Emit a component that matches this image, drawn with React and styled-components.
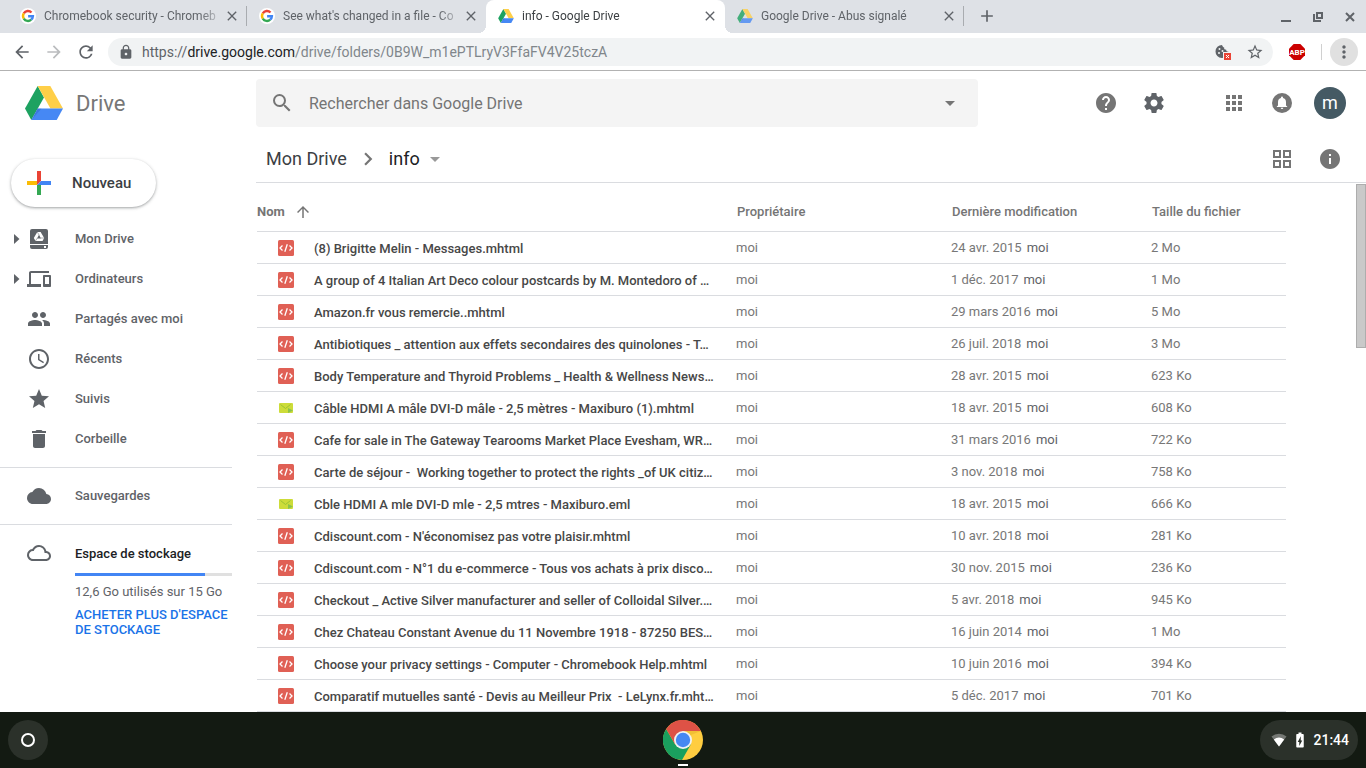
import styled, { createGlobalStyle, css } from 'styled-components';
import {
  MdAccessTime,
  MdAdd,
  MdApps,
  MdArrowBack,
  MdArrowDropDown,
  MdArrowForward,
  MdArrowUpward,
  MdBatteryChargingFull,
  MdChevronRight,
  MdClose,
  MdCloud,
  MdCloudQueue,
  MdDelete,
  MdDevices,
  MdHelp,
  MdInfo,
  MdLock,
  MdMoreVert,
  MdPeople,
  MdRefresh,
  MdSearch,
  MdStar,
  MdStarBorder,
} from 'react-icons/md';

const GlobalStyles = createGlobalStyle`
  *,
  *::before,
  *::after {
    box-sizing: border-box;
    margin: 0;
    padding: 0;
  }

  body {
    font-family: Roboto, 'Liberation Sans', sans-serif;
    font-size: 13px;
    color: #5f6368;
    background-color: #fff;
  }

  button,
  input {
    font: inherit;
    color: inherit;
    background: none;
    border: none;
    outline: none;
  }

  a {
    color: inherit;
    text-decoration: none;
  }

  svg {
    display: block;
    flex-shrink: 0;
  }
`;

const Screen = styled.div`
  height: 100vh;
  display: flex;
  flex-direction: column;
  overflow: hidden;
`;

/* Browser tabs */

const TabStrip = styled.div`
  height: 33px;
  flex-shrink: 0;
  display: flex;
  align-items: stretch;
  padding-left: 8px;
  background-color: #dee1e6;
`;

const Tab = styled.div`
  position: relative;
  flex: 0 1 239px;
  min-width: 0;
  display: flex;
  align-items: center;
  padding: 0 7px 1px 12px;
  font-size: 12px;
  line-height: 16px;

  ${(props) =>
    props.$active &&
    css`
      color: #3c4043;
      background-color: #fff;
      border-radius: 8px 8px 0 0;

      &::before,
      &::after {
        content: '';
        position: absolute;
        bottom: 0;
        width: 8px;
        height: 8px;
      }

      &::before {
        left: -8px;
        background: radial-gradient(circle at 0 0, transparent 8px, #fff 8px);
      }

      &::after {
        right: -8px;
        background: radial-gradient(circle at 100% 0, transparent 8px, #fff 8px);
      }
    `}
`;

const TabTitle = styled.span`
  flex: 1;
  min-width: 0;
  margin-left: 8px;
  overflow: hidden;
  white-space: nowrap;
  mask-image: linear-gradient(to right, #000 calc(100% - 24px), transparent);
`;

const TabClose = styled.button`
  display: flex;
  color: #5f6368;
`;

// The divider hangs on the right edge of its tab
const TabDivider = styled.span`
  position: absolute;
  top: 6px;
  right: 0;
  width: 1px;
  height: 20px;
  background-color: #a9acb0;
`;

const NewTab = styled.button`
  display: flex;
  align-items: center;
  margin-left: 13px;
  padding-bottom: 1px;
`;

const WindowControls = styled.div`
  display: flex;
  align-items: center;
  margin-left: auto;
  padding-right: 8px;
  gap: 16px;
`;

const WindowButton = styled.button`
  width: 16px;
  height: 16px;
`;

/* Address bar */

const Toolbar = styled.div`
  height: 38px;
  flex-shrink: 0;
  display: flex;
  align-items: center;
  padding: 0 8px 0 6px;
  border-bottom: 1px solid #b2b2b2;
`;

const ToolButton = styled.button`
  width: 32px;
  height: 28px;
  display: flex;
  align-items: center;
  justify-content: center;

  &:disabled {
    color: #babcbe;
  }
`;

const MenuButton = styled(ToolButton)`
  width: 28px;
  border-radius: 50%;
  background-color: #e0e0e0;
`;

const AddressBar = styled.div`
  flex: 1;
  height: 28px;
  display: flex;
  align-items: center;
  margin: 0 8px 0 6px;
  padding: 0 2px 0 10px;
  border-radius: 14px;
  background-color: #f1f3f4;
`;

const Url = styled.span`
  flex: 1;
  margin-left: 8px;
  font-size: 14px;
  line-height: 20px;
  color: #80868b;

  & span {
    color: #5f6368;
  }

  & strong {
    font-weight: 400;
    color: #202124;
  }
`;

const ToolDivider = styled.span`
  width: 1px;
  height: 16px;
  margin: 0 8px;
  background-color: #d0d0d0;
`;

/* Drive page */

const Page = styled.div`
  flex: 1;
  min-height: 0;
  display: flex;
  flex-direction: column;
`;

const Header = styled.header`
  height: 64px;
  flex-shrink: 0;
  display: flex;
  align-items: center;
  padding-right: 20px;
`;

const Brand = styled.a`
  width: 256px;
  flex-shrink: 0;
  display: flex;
  align-items: center;
  gap: 13px;
  padding-left: 25px;
  font-size: 22px;
  line-height: 28px;
  color: #777;
`;

const BrandName = styled.span`
  padding-top: 2px;
`;

const SearchBar = styled.form`
  flex: 0 1 722px;
  height: 48px;
  display: flex;
  align-items: center;
  padding: 0 16px 0 14px;
  border-radius: 4px;
  color: #757575;
  background-color: #f4f4f4;
`;

const SearchInput = styled.input`
  flex: 1;
  min-width: 0;
  margin: 0 15px;
  padding-top: 2px;
  font-size: 16px;
  line-height: 24px;

  &::placeholder {
    color: #757575;
    opacity: 1;
  }
`;

const PlainButton = styled.button`
  display: flex;
  color: ${(props) => props.$color || '#757575'};
`;

const IconGroup = styled.div`
  display: flex;
  align-items: center;
  gap: 24px;
`;

const HeaderActions = styled.div`
  display: flex;
  align-items: center;
  gap: 56px;
  margin-left: auto;
`;

const Avatar = styled.button`
  width: 32px;
  height: 32px;
  margin-left: 20px;
  border-radius: 50%;
  font-size: 18px;
  line-height: 32px;
  color: #fff;
  background-color: #455a64;
`;

const Columns = styled.div`
  flex: 1;
  min-height: 0;
  display: flex;
`;

const Sidebar = styled.aside`
  width: 256px;
  flex-shrink: 0;
  padding: 24px 24px 0 0;
  font-weight: 500;
`;

const NewButton = styled.button`
  width: 145px;
  height: 48px;
  display: flex;
  align-items: center;
  gap: 21px;
  margin: 0 0 12px 11px;
  padding-left: 16px;
  border-radius: 24px;
  font-size: 15px;
  font-weight: 500;
  color: #3c4043;
  background-color: #fff;
  box-shadow:
    0 1px 2px rgba(60, 64, 67, 0.3),
    0 1px 3px 1px rgba(60, 64, 67, 0.15);
`;

const NavItem = styled.a`
  height: 40px;
  display: flex;
  align-items: center;
  line-height: 20px;
`;

const NavArrow = styled.span`
  width: 27px;
  display: flex;
  justify-content: flex-end;
  padding-right: 7px;
`;

const NavLabel = styled.span`
  margin-left: 24px;
`;

const Divider = styled.hr`
  height: 1px;
  margin: 8px 0;
  border: none;
  background-color: #dadce0;
`;

const Storage = styled.section`
  display: flex;
  gap: 24px;
  padding: 8px 0 0 27px;
`;

const StorageInfo = styled.div`
  flex: 1;
  font-weight: 400;
  line-height: 15px;
`;

const StorageTitle = styled.h2`
  padding-top: 1px;
  font-size: 13px;
  font-weight: 500;
  line-height: 24px;
  color: #202124;
`;

const StorageBar = styled.div`
  height: 3px;
  margin: 7px 0 8px;
  background-color: #e0e0e0;
`;

const StorageFill = styled.div`
  height: 100%;
  background-color: #4285f4;
`;

const BuyLink = styled.a`
  display: block;
  margin-top: 8px;
  font-weight: 500;
  color: #1a73e8;
`;

const Main = styled.main`
  flex: 1;
  min-width: 0;
  display: flex;
  flex-direction: column;
`;

const PathBar = styled.div`
  height: 48px;
  flex-shrink: 0;
  display: flex;
  align-items: center;
  justify-content: space-between;
  padding: 0 24px 0 10px;
  border-bottom: 1px solid #dadce0;
`;

const Path = styled.nav`
  display: flex;
  align-items: center;
  gap: 8px;
  color: #757575;
`;

const Crumb = styled.a`
  font-size: 18px;
  line-height: 24px;
  color: ${(props) => (props.$current ? '#202124' : '#3c4043')};
`;

const CurrentFolder = styled.div`
  display: flex;
  align-items: center;
  gap: 3px;
`;

const ListArea = styled.div`
  flex: 1;
  min-height: 0;
  display: flex;
  overflow: hidden;
`;

const ListPane = styled.div`
  flex: 1;
  min-width: 0;
  padding: 0 70px 0 1px;
`;

const FileTable = styled.table`
  width: 100%;
  table-layout: fixed;
  border-collapse: separate;
  border-spacing: 0;
`;

const Column = styled.col`
  width: ${(props) => props.$width};
`;

const HeadCell = styled.th`
  height: 49px;
  padding-top: 9px;
  padding-left: ${(props) => (props.$first ? '0' : '1px')};
  font-weight: 500;
  text-align: left;
  color: #757575;
  border-bottom: 1px solid #dadce0;
`;

const SortButton = styled.button`
  display: flex;
  align-items: center;
  gap: 9px;
  font-weight: 700;
`;

const Cell = styled.td`
  height: 32px;
  padding-top: 1px;
  line-height: 16px;
  white-space: nowrap;
  color: #777;
  border-bottom: 1px solid #dadce0;
`;

const Editor = styled.span`
  margin-left: 5px;
  color: #5f6368;
`;

const FileLink = styled.a`
  display: flex;
  align-items: center;
  gap: 20px;
  padding-left: 21px;
  font-weight: 500;
  color: #474747;
`;

const FileName = styled.span`
  padding-top: 2px;
  white-space: pre;
`;

const ScrollTrack = styled.div`
  width: 10px;
  padding-top: 1px;
`;

const ScrollThumb = styled.div`
  height: 31%;
  border: 1px solid #adadad;
  background-color: #c9c9c9;
`;

/* Shelf */

const Shelf = styled.footer`
  height: 56px;
  flex-shrink: 0;
  display: grid;
  grid-template-columns: 1fr auto 1fr;
  align-items: center;
  padding: 0 8px;
  background-color: #131a12;
`;

const Launcher = styled.button`
  width: 40px;
  height: 40px;
  display: flex;
  align-items: center;
  justify-content: center;
  border-radius: 50%;
  background-color: #2b312a;

  &::before {
    content: '';
    width: 14px;
    height: 14px;
    border: 2px solid #fff;
    border-radius: 50%;
  }
`;

const ShelfApp = styled.button`
  height: 56px;
  display: flex;
  flex-direction: column;
  align-items: center;
  gap: 4px;
  padding-top: 8px;

  &::after {
    content: '';
    width: 10px;
    height: 2px;
    background-color: #fff;
  }
`;

const Tray = styled.button`
  height: 40px;
  justify-self: end;
  display: flex;
  align-items: center;
  gap: 4px;
  padding: 0 9px 0 11px;
  border-radius: 20px;
  font-size: 14px;
  font-weight: 500;
  color: #fff;
  background-color: #2b312a;
`;

function GoogleIcon() {
  return (
    <svg width='16' height='16' viewBox='0 0 16 16' aria-hidden='true'>
      <circle cx='8' cy='8' r='8' fill='#fff' />
      <g fill='none' strokeWidth='2.4'>
        <path d='M3.8 5.4A4.9 4.9 0 0 1 11.5 4.5' stroke='#ea4335' />
        <path d='M3.8 5.4A4.9 4.9 0 0 0 3.8 10.6' stroke='#fbbc05' />
        <path d='M3.8 10.6A4.9 4.9 0 0 0 11.2 11.7' stroke='#34a853' />
        <path d='M8.1 8.2H12.9A4.9 4.9 0 0 1 11.2 11.7' stroke='#4285f4' />
      </g>
    </svg>
  );
}

function DriveIcon({ width = 38, height = 34, faded }) {
  return (
    <svg
      width={width}
      height={height}
      viewBox='0 0 38 34'
      opacity={faded ? 0.8 : 1}
      aria-hidden='true'
    >
      <path d='M12.7 0 0 22.6 6.3 34 19 11.4z' fill='#1da261' />
      <path d='M12.7 0h12.6L38 22.6H25.4z' fill='#ffcf48' />
      <path d='M6.3 34 12.6 22.6H38L31.7 34z' fill='#4688f4' />
      <path d='M6.3 34 12.6 22.6h4z' fill='#1c3a80' opacity='.2' />
    </svg>
  );
}

function CookieIcon() {
  return (
    <svg width='16' height='16' viewBox='0 0 16 16' aria-hidden='true'>
      <path
        d='M7 1a6.5 6.5 0 1 0 6.5 6.8c-1.6.2-2.3-.8-2.3-2-1.6 0-2.3-1-2-2.3C8 3.2 7.4 2.2 7 1z'
        fill='#5f6368'
      />
      <g fill='#f1f3f4'>
        <circle cx='4.5' cy='5' r='1' />
        <circle cx='7.5' cy='7' r='1' />
        <circle cx='4' cy='9' r='1' />
      </g>
      <path d='M8 8h8v8H8z' fill='#f1f3f4' />
      <path d='M9 9h7v7H9z' fill='#ea4335' />
      <path d='m11 11 3 3m0-3-3 3' stroke='#fff' />
    </svg>
  );
}

function AdblockIcon() {
  return (
    <svg width='16' height='16' viewBox='0 0 16 16' aria-hidden='true'>
      <path d='M4.7 0h6.6L16 4.7v6.6L11.3 16H4.7L0 11.3V4.7z' fill='#cc0000' />
      <text
        x='8'
        y='11'
        fill='#fff'
        fontSize='8'
        fontWeight='700'
        fontFamily='Roboto, sans-serif'
        textAnchor='middle'
      >
        ABP
      </text>
    </svg>
  );
}

function GearIcon() {
  return (
    <svg width='24' height='24' viewBox='0 0 24 24' fill='currentColor' aria-hidden='true'>
      <path d='M19.43 12.98c.04-.32.07-.64.07-.98s-.03-.66-.07-.98l2.11-1.65c.19-.15.24-.42.12-.64l-2-3.46c-.12-.22-.39-.3-.61-.22l-2.49 1c-.52-.4-1.08-.73-1.69-.98l-.38-2.65C14.46 2.18 14.25 2 14 2h-4c-.25 0-.46.18-.49.42l-.38 2.65c-.61.25-1.17.59-1.69.98l-2.49-1c-.23-.09-.49 0-.61.22l-2 3.46c-.13.22-.07.49.12.64l2.11 1.65c-.04.32-.07.65-.07.98s.03.66.07.98l-2.11 1.65c-.19.15-.24.42-.12.64l2 3.46c.12.22.39.3.61.22l2.49-1c.52.4 1.08.73 1.69.98l.38 2.65c.03.24.24.42.49.42h4c.25 0 .46-.18.49-.42l.38-2.65c.61-.25 1.17-.59 1.69-.98l2.49 1c.23.09.49 0 .61-.22l2-3.46c.12-.22.07-.49-.12-.64l-2.11-1.65zM12 15.5c-1.93 0-3.5-1.57-3.5-3.5s1.57-3.5 3.5-3.5 3.5 1.57 3.5 3.5-1.57 3.5-3.5 3.5z' />
    </svg>
  );
}

function BellIcon() {
  return (
    <svg width='24' height='24' viewBox='0 0 24 24' aria-hidden='true'>
      <circle cx='12' cy='12' r='10' fill='#757575' />
      <path
        d='M12 18a1.3 1.3 0 0 0 1.3-1.3h-2.6A1.3 1.3 0 0 0 12 18zm4-3.5V11c0-2-1.2-3.5-3-3.9v-.5a1 1 0 0 0-2 0v.5C9.2 7.5 8 9 8 11v3.5l-1.2 1v.6h10.4v-.6z'
        fill='#fff'
      />
    </svg>
  );
}

function GridIcon() {
  return (
    <svg width='24' height='24' viewBox='0 0 24 24' aria-hidden='true'>
      <path
        d='M4 4h6v6H4zM14 4h6v6h-6zM4 14h6v6H4zM14 14h6v6h-6z'
        fill='none'
        stroke='#757575'
        strokeWidth='2'
      />
    </svg>
  );
}

function PlusIcon() {
  return (
    <svg width='24' height='24' viewBox='0 0 24 24' aria-hidden='true'>
      <path d='M10 0h4v10l-4 4z' fill='#ea4335' />
      <path d='M0 10h10v4H0z' fill='#fbbc05' />
      <path d='M10 14h4v10h-4z' fill='#34a853' />
      <path d='M14 10h10v4H10z' fill='#4285f4' />
    </svg>
  );
}

function MyDriveIcon() {
  return (
    <svg width='24' height='24' viewBox='0 0 24 24' aria-hidden='true'>
      <path
        d='M5 2h14a2 2 0 0 1 2 2v13H3V4a2 2 0 0 1 2-2zM3 18h18v2a2 2 0 0 1-2 2H5a2 2 0 0 1-2-2z'
        fill='#5f6368'
      />
      <path
        d='M10.3 5h3.3l3.6 6-1.7 2.9H8.5L6.8 11zm1.7 2.8-2 3.7h4z'
        fill='#fff'
        fillRule='evenodd'
      />
      <path
        d='m10.3 5 1.9 3.2M17.2 11h-3.6M8.5 13.9l1.7-2.7'
        stroke='#5f6368'
        strokeWidth='.5'
      />
      <path d='M17 19h2v2h-2z' fill='#fff' />
    </svg>
  );
}

function CodeFileIcon() {
  return (
    <svg width='16' height='16' viewBox='0 0 16 16' aria-hidden='true'>
      <rect width='16' height='16' rx='1.5' fill='#e06055' />
      <path
        d='M4.5 5.5 2 8l2.5 2.5M11.5 5.5 14 8l-2.5 2.5M9.3 4.3 6.8 11.7'
        fill='none'
        stroke='#fff'
        strokeWidth='1.3'
      />
    </svg>
  );
}

function MailFileIcon() {
  return (
    <svg width='16' height='16' viewBox='0 0 16 16' aria-hidden='true'>
      <rect x='1' y='3' width='14' height='10' rx='1' fill='#cddc39' />
      <path d='m2.5 4.5 5 4 5-4' fill='none' stroke='#9bc432' />
      <path d='M10 8 15 10.5 10 13z' fill='#8bc34a' />
    </svg>
  );
}

function ChromeIcon() {
  return (
    <svg width='40' height='40' viewBox='0 0 40 40' aria-hidden='true'>
      <circle cx='20' cy='20' r='20' fill='#ffcd40' />
      <path d='M3.2 9.1 12.2 24.5H27.8L19 40A20 20 0 0 1 3.2 9.1z' fill='#1aa05e' />
      <path d='M3.2 9.1A20 20 0 0 1 37.9 11H20L12.2 24.5z' fill='#de5246' />
      <path d='M20 11h17.900l-10 4z' fill='#b8860b' opacity='.2' />
      <circle cx='20' cy='20' r='9' fill='#f1f1f1' />
      <circle cx='20' cy='20' r='7.2' fill='#4688f1' />
    </svg>
  );
}

function WifiIcon() {
  return (
    <svg width='16' height='16' viewBox='0 0 16 16' aria-hidden='true'>
      <path d='M8 14.5.5 4.5a12 12 0 0 1 15 0z' fill='#fff' opacity='.35' />
      <path d='M8 14.5 2.8 7.6a8.5 8.5 0 0 1 10.4 0z' fill='#fff' />
    </svg>
  );
}

const tabs = [
  { title: 'Chromebook security - Chromeb', icon: <GoogleIcon />, divider: true },
  { title: "See what's changed in a file - Co", icon: <GoogleIcon /> },
  { title: 'info - Google Drive', icon: <DriveIcon width={16} height={14} />, active: true },
  {
    title: 'Google Drive - Abus signalé',
    icon: <DriveIcon width={16} height={14} faded />,
    divider: true,
  },
];

const navItems = [
  { label: 'Mon Drive', icon: <MyDriveIcon />, nested: true },
  { label: 'Ordinateurs', icon: <MdDevices size={24} />, nested: true },
  { label: 'Partagés avec moi', icon: <MdPeople size={24} /> },
  { label: 'Récents', icon: <MdAccessTime size={24} /> },
  { label: 'Suivis', icon: <MdStar size={24} /> },
  { label: 'Corbeille', icon: <MdDelete size={24} /> },
];

const storage = { used: 12.45, total: 15 };

const files = [
  { name: '(8) Brigitte Melin - Messages.mhtml', date: '24 avr. 2015', size: '2 Mo' },
  {
    name: 'A group of 4 Italian Art Deco colour postcards by M. Montedoro of …',
    date: '1 déc. 2017',
    size: '1 Mo',
  },
  { name: 'Amazon.fr vous remercie..mhtml', date: '29 mars 2016', size: '5 Mo' },
  {
    name: 'Antibiotiques _ attention aux effets secondaires des quinolones - T…',
    date: '26 juil. 2018',
    size: '3 Mo',
  },
  {
    name: 'Body Temperature and Thyroid Problems _ Health & Wellness News…',
    date: '28 avr. 2015',
    size: '623 Ko',
  },
  {
    name: 'Câble HDMI A mâle DVI-D mâle - 2,5 mètres - Maxiburo (1).mhtml',
    date: '18 avr. 2015',
    size: '608 Ko',
    mail: true,
  },
  {
    name: 'Cafe for sale in The Gateway Tearooms Market Place Evesham, WR…',
    date: '31 mars 2016',
    size: '722 Ko',
  },
  {
    name: 'Carte de séjour -  Working together to protect the rights _of UK citiz…',
    date: '3 nov. 2018',
    size: '758 Ko',
  },
  {
    name: 'Cble HDMI A mle DVI-D mle - 2,5 mtres - Maxiburo.eml',
    date: '18 avr. 2015',
    size: '666 Ko',
    mail: true,
  },
  {
    name: "Cdiscount.com - N'économisez pas votre plaisir.mhtml",
    date: '10 avr. 2018',
    size: '281 Ko',
  },
  {
    name: 'Cdiscount.com - N°1 du e-commerce - Tous vos achats à prix disco…',
    date: '30 nov. 2015',
    size: '236 Ko',
  },
  {
    name: 'Checkout _ Active Silver manufacturer and seller of Colloidal Silver.…',
    date: '5 avr. 2018',
    size: '945 Ko',
  },
  {
    name: 'Chez Chateau Constant Avenue du 11 Novembre 1918 - 87250 BES…',
    date: '16 juin 2014',
    size: '1 Mo',
  },
  {
    name: 'Choose your privacy settings - Computer - Chromebook Help.mhtml',
    date: '10 juin 2016',
    size: '394 Ko',
  },
  {
    name: 'Comparatif mutuelles santé - Devis au Meilleur Prix  - LeLynx.fr.mht…',
    date: '5 déc. 2017',
    size: '701 Ko',
  },
];

function BrowserTabs() {
  return (
    <TabStrip>
      {tabs.map((tab) => (
        <Tab key={tab.title} $active={tab.active}>
          {tab.icon}
          <TabTitle>{tab.title}</TabTitle>
          <TabClose aria-label='Fermer'>
            <MdClose size={16} />
          </TabClose>
          {tab.divider && <TabDivider />}
        </Tab>
      ))}
      <NewTab aria-label='Nouvel onglet'>
        <MdAdd size={20} />
      </NewTab>
      <WindowControls>
        <WindowButton aria-label='Réduire'>
          <svg width='16' height='16' viewBox='0 0 16 16'>
            <path d='M3 12h10' stroke='#5f6368' strokeWidth='2' />
          </svg>
        </WindowButton>
        <WindowButton aria-label='Restaurer'>
          <svg width='16' height='16' viewBox='0 0 16 16'>
            <path d='M7 4h5v5H7zM4 5v7h7' fill='none' stroke='#5f6368' strokeWidth='2' />
          </svg>
        </WindowButton>
        <WindowButton aria-label='Fermer la fenêtre'>
          <svg width='16' height='16' viewBox='0 0 16 16'>
            <path d='m4 4 8 8m0-8-8 8' stroke='#5f6368' strokeWidth='2' />
          </svg>
        </WindowButton>
      </WindowControls>
    </TabStrip>
  );
}

function AddressToolbar() {
  return (
    <Toolbar>
      <ToolButton aria-label='Retour'>
        <MdArrowBack size={20} />
      </ToolButton>
      <ToolButton aria-label='Avancer' disabled>
        <MdArrowForward size={20} />
      </ToolButton>
      <ToolButton aria-label='Actualiser'>
        <MdRefresh size={20} />
      </ToolButton>
      <AddressBar>
        <MdLock size={16} />
        <Url>
          <span>https://</span>
          <strong>drive.google.com</strong>
          /drive/folders/0B9W_m1ePTLryV3FfaFV4V25tczA
        </Url>
        <ToolButton aria-label='Cookies bloqués'>
          <CookieIcon />
        </ToolButton>
        <ToolButton aria-label='Ajouter aux favoris'>
          <MdStarBorder size={18} />
        </ToolButton>
      </AddressBar>
      <ToolButton aria-label='Adblock Plus'>
        <AdblockIcon />
      </ToolButton>
      <ToolDivider />
      <MenuButton aria-label='Menu'>
        <MdMoreVert size={20} />
      </MenuButton>
    </Toolbar>
  );
}

function DriveHeader() {
  return (
    <Header>
      <Brand href='#'>
        <DriveIcon />
        <BrandName>Drive</BrandName>
      </Brand>
      <SearchBar>
        <PlainButton type='button' aria-label='Rechercher'>
          <MdSearch size={24} />
        </PlainButton>
        <SearchInput
          type='text'
          placeholder='Rechercher dans Google Drive'
          aria-label='Rechercher dans Google Drive'
        />
        <PlainButton type='button' aria-label='Options de recherche'>
          <MdArrowDropDown size={24} />
        </PlainButton>
      </SearchBar>
      <HeaderActions>
        <IconGroup>
          <PlainButton aria-label='Aide'>
            <MdHelp size={24} />
          </PlainButton>
          <PlainButton aria-label='Paramètres' $color='#5f6368'>
            <GearIcon />
          </PlainButton>
        </IconGroup>
        <IconGroup>
          <PlainButton aria-label='Applications Google'>
            <MdApps size={24} />
          </PlainButton>
          <PlainButton aria-label='Notifications'>
            <BellIcon />
          </PlainButton>
        </IconGroup>
      </HeaderActions>
      <Avatar aria-label='Compte Google'>m</Avatar>
    </Header>
  );
}

function DriveSidebar() {
  return (
    <Sidebar>
      <NewButton>
        <PlusIcon />
        Nouveau
      </NewButton>
      <nav>
        {navItems.map((item) => (
          <NavItem href='#' key={item.label}>
            <NavArrow>
              {item.nested && (
                <svg width='6' height='10' viewBox='0 0 6 10' aria-hidden='true'>
                  <path d='M0 0v10l5.5-5z' fill='#5f6368' />
                </svg>
              )}
            </NavArrow>
            {item.icon}
            <NavLabel>{item.label}</NavLabel>
          </NavItem>
        ))}
        <Divider />
        <NavItem href='#'>
          <NavArrow />
          <MdCloud size={24} />
          <NavLabel>Sauvegardes</NavLabel>
        </NavItem>
      </nav>
      <Divider />
      <Storage>
        <MdCloudQueue size={24} />
        <StorageInfo>
          <StorageTitle>Espace de stockage</StorageTitle>
          <StorageBar>
            <StorageFill style={{ width: `${(storage.used / storage.total) * 100}%` }} />
          </StorageBar>
          <p>12,6 Go utilisés sur 15 Go</p>
          <BuyLink href='#'>ACHETER PLUS D'ESPACE DE STOCKAGE</BuyLink>
        </StorageInfo>
      </Storage>
    </Sidebar>
  );
}

function FileList() {
  return (
    <FileTable>
      <colgroup>
        <Column />
        <Column $width='215px' />
        <Column $width='200px' />
        <Column $width='135px' />
      </colgroup>
      <thead>
        <tr>
          <HeadCell $first>
            <SortButton>
              Nom
              <MdArrowUpward size={18} />
            </SortButton>
          </HeadCell>
          <HeadCell>Propriétaire</HeadCell>
          <HeadCell>Dernière modification</HeadCell>
          <HeadCell>Taille du fichier</HeadCell>
        </tr>
      </thead>
      <tbody>
        {files.map((file) => (
          <tr key={file.name}>
            <Cell>
              <FileLink href='#'>
                {file.mail ? <MailFileIcon /> : <CodeFileIcon />}
                <FileName>{file.name}</FileName>
              </FileLink>
            </Cell>
            <Cell>moi</Cell>
            <Cell>
              {file.date}
              <Editor>moi</Editor>
            </Cell>
            <Cell>{file.size}</Cell>
          </tr>
        ))}
      </tbody>
    </FileTable>
  );
}

function App() {
  return (
    <>
      <GlobalStyles />
      <Screen>
        <BrowserTabs />
        <AddressToolbar />
        <Page>
          <DriveHeader />
          <Columns>
            <DriveSidebar />
            <Main>
              <PathBar>
                <Path>
                  <Crumb href='#'>Mon Drive</Crumb>
                  <MdChevronRight size={26} />
                  <CurrentFolder>
                    <Crumb href='#' $current>
                      info
                    </Crumb>
                    <PlainButton aria-label='Actions du dossier' $color='#999'>
                      <MdArrowDropDown size={24} />
                    </PlainButton>
                  </CurrentFolder>
                </Path>
                <IconGroup>
                  <PlainButton aria-label='Grille'>
                    <GridIcon />
                  </PlainButton>
                  <PlainButton aria-label='Détails'>
                    <MdInfo size={24} />
                  </PlainButton>
                </IconGroup>
              </PathBar>
              <ListArea>
                <ListPane>
                  <FileList />
                </ListPane>
                <ScrollTrack>
                  <ScrollThumb />
                </ScrollTrack>
              </ListArea>
            </Main>
          </Columns>
        </Page>
        <Shelf>
          <Launcher aria-label='Lanceur' />
          <ShelfApp aria-label='Google Chrome'>
            <ChromeIcon />
          </ShelfApp>
          <Tray>
            <WifiIcon />
            <MdBatteryChargingFull size={18} />
            <span>21:44</span>
          </Tray>
        </Shelf>
      </Screen>
    </>
  );
}

export default App;
